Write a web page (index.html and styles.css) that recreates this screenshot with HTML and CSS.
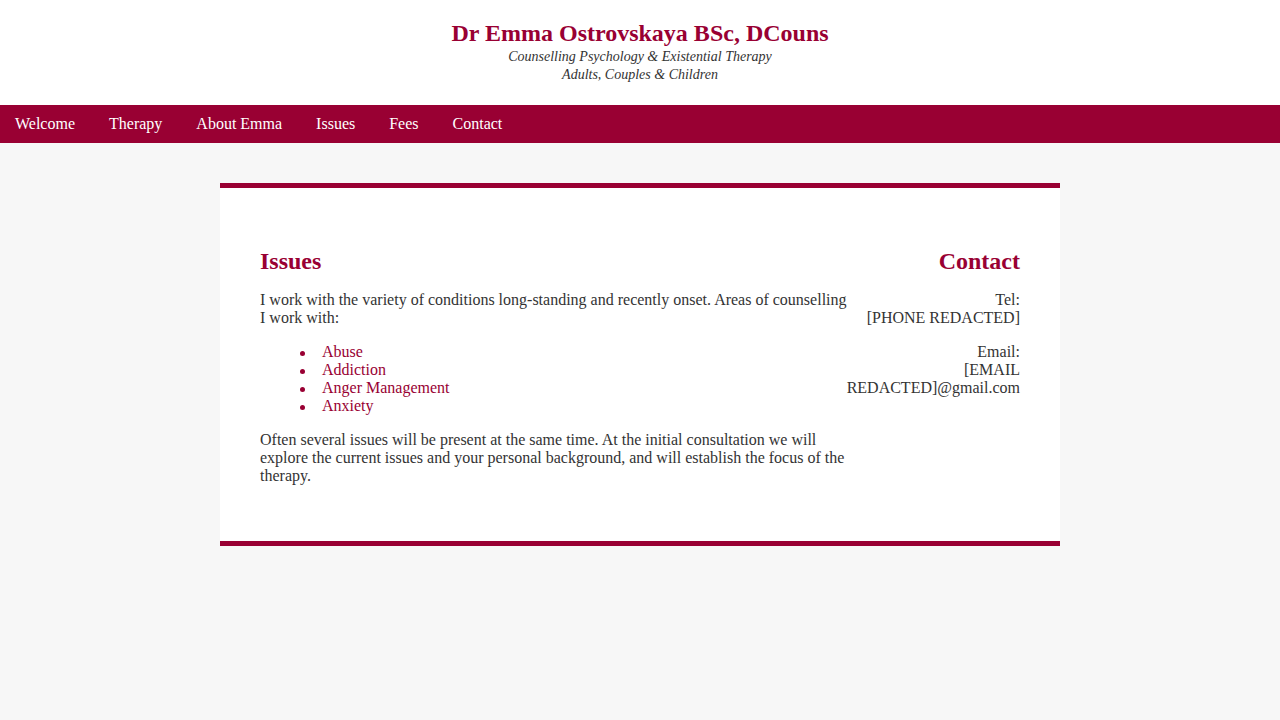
FILE: index.html
```html
<!DOCTYPE html>
<html lang="en">
<head>
<meta charset="utf-8">
<title>Dr Emma Ostrovskaya - Issues</title>
<link rel="stylesheet" href="styles.css">
</head>
<body>
<header class="masthead">
  <div class="site-title">Dr Emma Ostrovskaya BSc, DCouns</div>
  <div class="tagline">Counselling Psychology &amp; Existential Therapy</div>
  <div class="tagline">Adults, Couples &amp; Children</div>
</header>
<nav class="mainnav">
  <a href="#">Welcome</a>
  <a href="#">Therapy</a>
  <a href="#">About Emma</a>
  <a href="#">Issues</a>
  <a href="#">Fees</a>
  <a href="#">Contact</a>
</nav>
<main class="page">
  <section class="card">
    <div class="main-col">
      <h2>Issues</h2>
      <p>I work with the variety of conditions long-standing and recently onset. Areas of counselling I work with:</p>
      <ul class="issues">
        <li>Abuse</li>
        <li>Addiction</li>
        <li>Anger Management</li>
        <li>Anxiety</li>
      </ul>
      <p>Often several issues will be present at the same time. At the initial consultation we will explore the current issues and your personal background, and will establish the focus of the therapy.</p>
    </div>
    <aside class="side-col">
      <h2>Contact</h2>
      <p>Tel:<br>[PHONE REDACTED]</p>
      <p>Email:<br>[EMAIL REDACTED]@gmail.com</p>
    </aside>
  </section>
</main>
</body>
</html>
```
FILE: styles.css
```css
html, body {
  margin: 0;
  padding: 0;
}
body {
  background: #f7f7f7;
  font-family: "Liberation Serif", "Times New Roman", serif;
  font-size: 16px;
  color: #333333;
}
.masthead {
  background: #ffffff;
  height: 105px;
  box-sizing: border-box;
  padding-top: 20px;
  text-align: center;
}
.site-title {
  font-size: 24px;
  font-weight: bold;
  color: #990033;
  margin-bottom: 1px;
}
.tagline {
  font-size: 14px;
  font-style: italic;
  line-height: 18px;
  color: #333333;
}
.mainnav {
  background: #990033;
  height: 38px;
  display: flex;
  align-items: center;
  gap: 4px;
  padding-left: 0;
}
.mainnav a {
  color: #ffffff;
  text-decoration: none;
  padding: 0 15px;
  font-size: 16px;
}
.page {
  padding-top: 40px;
  display: flex;
  justify-content: center;
}
.card {
  width: 840px;
  box-sizing: border-box;
  background: #ffffff;
  border-top: 5px solid #990033;
  border-bottom: 5px solid #990033;
  padding: 41px 40px 40px;
  display: grid;
  grid-template-columns: 588px 172px;
}
.card h2 {
  color: #990033;
  font-size: 24px;
  font-weight: bold;
  margin: 19px 0 12px;
}
.card p {
  margin: 16px 0;
}
.side-col {
  text-align: right;
  margin-left: -8px;
}
.issues {
  list-style: none;
  margin: 16px 0;
  padding-left: 40px;
  color: #990033;
}
.issues li::before {
  content: "";
  display: inline-block;
  width: 5px;
  height: 5px;
  border-radius: 50%;
  background: currentColor;
  margin-right: 17px;
  vertical-align: 1px;
}
```
